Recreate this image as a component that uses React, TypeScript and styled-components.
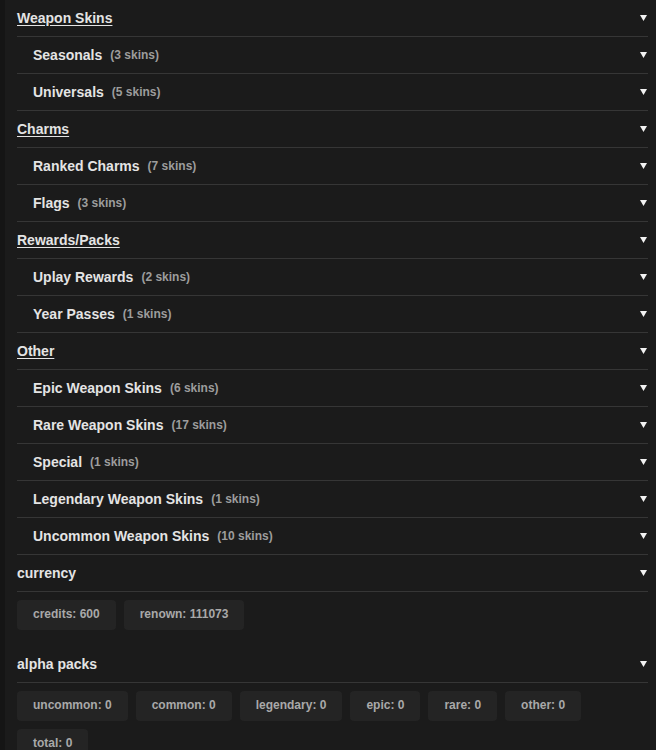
import React from "react";
import styled, { createGlobalStyle } from "styled-components";

const Global = createGlobalStyle`
  html, body { margin: 0; padding: 0; background: #151515; }
  body { font-family: "Liberation Sans", Arial, sans-serif; }
`;

const Panel = styled.div`
  margin-left: 5px;
  background: #1b1b1b;
  padding: 0 8px 0 12px;
  min-height: 750px;
  box-sizing: border-box;
`;

const Row = styled.div<{ $indent?: boolean }>`
  display: flex;
  align-items: center;
  height: 36px;
  border-bottom: 1px solid #363636;
  padding-left: ${(p) => (p.$indent ? "16px" : "0")};
  padding-right: 1px;
  cursor: pointer;
`;

const Title = styled.span<{ $underline?: boolean }>`
  font-size: 14px;
  font-weight: 700;
  color: #e4e4e4;
  text-decoration: ${(p) => (p.$underline ? "underline" : "none")};
  text-underline-offset: 2px;
`;

const Count = styled.span`
  font-size: 12px;
  font-weight: 700;
  color: #9d9d9d;
  margin-left: 8px;
`;

const Spacer = styled.div`
  flex: 1;
`;

const Arrow = styled.svg`
  width: 7px;
  height: 6px;
  display: block;
`;

const Chips = styled.div`
  display: flex;
  flex-wrap: wrap;
  gap: 8px 8px;
  padding: 8px 0 16px;
`;

const Chip = styled.div`
  background: #242424;
  border-radius: 4px;
  padding: 7px 16px 9px;
  font-size: 12px;
  line-height: 14px;
  font-weight: 700;
  color: #a9a9a9;
`;

const Caret = () => (
  <Arrow viewBox="0 0 7 6">
    <polygon points="0,0 7,0 3.5,6" fill="#f2f2f2" />
  </Arrow>
);

type Sub = { name: string; count: number };
const groups: { title: string; items: Sub[] }[] = [
  { title: "Weapon Skins", items: [{ name: "Seasonals", count: 3 }, { name: "Universals", count: 5 }] },
  { title: "Charms", items: [{ name: "Ranked Charms", count: 7 }, { name: "Flags", count: 3 }] },
  { title: "Rewards/Packs", items: [{ name: "Uplay Rewards", count: 2 }, { name: "Year Passes", count: 1 }] },
  {
    title: "Other",
    items: [
      { name: "Epic Weapon Skins", count: 6 },
      { name: "Rare Weapon Skins", count: 17 },
      { name: "Special", count: 1 },
      { name: "Legendary Weapon Skins", count: 1 },
      { name: "Uncommon Weapon Skins", count: 10 },
    ],
  },
];

const currency = ["credits: 600", "renown: 111073"];
const packs = ["uncommon: 0", "common: 0", "legendary: 0", "epic: 0", "rare: 0", "other: 0", "total: 0"];

export default function App() {
  return (
    <>
      <Global />
      <Panel>
        {groups.map((g) => (
          <React.Fragment key={g.title}>
            <Row>
              <Title $underline>{g.title}</Title>
              <Spacer />
              <Caret />
            </Row>
            {g.items.map((it) => (
              <Row $indent key={it.name}>
                <Title>{it.name}</Title>
                <Count>({it.count} skins)</Count>
                <Spacer />
                <Caret />
              </Row>
            ))}
          </React.Fragment>
        ))}
        <Row>
          <Title>currency</Title>
          <Spacer />
          <Caret />
        </Row>
        <Chips>
          {currency.map((c) => (
            <Chip key={c}>{c}</Chip>
          ))}
        </Chips>
        <Row>
          <Title>alpha packs</Title>
          <Spacer />
          <Caret />
        </Row>
        <Chips>
          {packs.map((c) => (
            <Chip key={c}>{c}</Chip>
          ))}
        </Chips>
      </Panel>
    </>
  );
}
